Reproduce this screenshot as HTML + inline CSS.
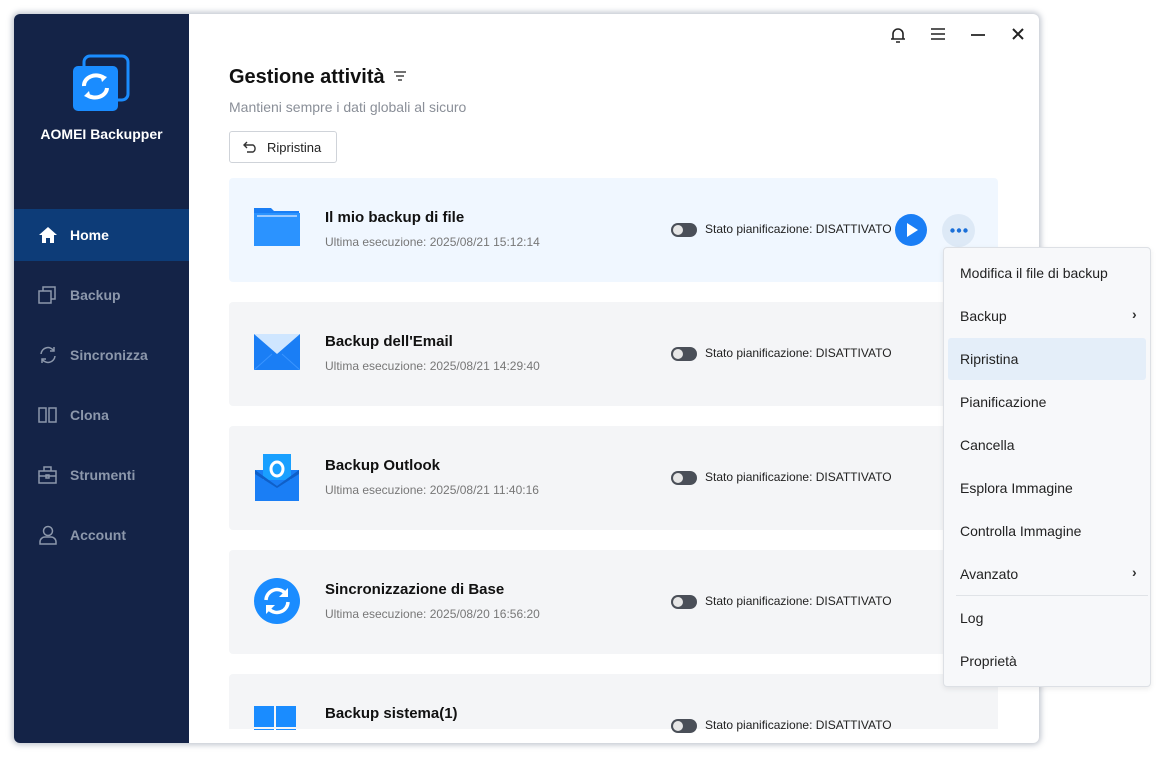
<!DOCTYPE html>
<html><head><meta charset="utf-8"><style>
*{margin:0;padding:0;box-sizing:border-box}
body{width:1163px;height:767px;background:#fff;font-family:"Liberation Sans",sans-serif;position:relative;overflow:hidden}
.win{position:absolute;left:14px;top:14px;width:1025px;height:729px;background:#fff;border-radius:6px;box-shadow:0 0 6px 2px rgba(120,130,150,.45);overflow:hidden}
.side{position:absolute;left:0;top:0;width:175px;height:729px;background:#142347}
.logo{position:absolute;left:58px;top:40px}
.brand{position:absolute;left:0;width:175px;top:112px;text-align:center;color:#fff;font-weight:bold;font-size:14px}
.nav{position:absolute;left:0;width:175px;height:52px;display:flex;align-items:center;color:#8c97ab;font-size:14px;font-weight:bold}
.nav svg{position:absolute;left:24px}
.nav span{position:absolute;left:56px}
.nav.act{background:#0d3c78;color:#fff}
.abs{position:absolute}
.card{position:absolute;left:215px;width:769px;height:104px;background:#f4f5f7;border-radius:4px}
.card .t{position:absolute;left:96px;top:31px;font-size:15px;font-weight:bold;color:#111}
.card .s{position:absolute;left:96px;top:57px;font-size:12px;color:#777}
.card .ic{position:absolute;left:25px;top:28px}
.tog{position:absolute;left:442px;width:26px;height:14px;border-radius:7px;background:#4a4f58}
.tog:after{content:"";position:absolute;left:2px;top:2px;width:10px;height:10px;border-radius:5px;background:#e6e6e6}
.st{position:absolute;left:476px;font-size:12px;color:#222}
.menu{position:absolute;left:943px;top:247px;width:208px;height:440px;background:#f7f8fa;border:1px solid #dde0e5;border-radius:4px;box-shadow:0 2px 6px rgba(0,0,0,.08)}
.mi{position:absolute;left:16px;font-size:14px;color:#222}
.chev{position:absolute;left:188px;font-size:14px;color:#333;font-weight:bold}
</style></head><body>
<div class="win">
 <div class="side">
  <svg class="logo" width="58" height="58" viewBox="0 0 58 58"><rect x="12" y="2" width="44" height="44" rx="6" fill="none" stroke="#1a8cff" stroke-width="3"/><rect x="1" y="12" width="45" height="45" rx="5" fill="#1a8cff"/><path d="M12 32a12 10 0 0 1 20-8" stroke="#fff" stroke-width="4" fill="none"/><path d="M35 34a12 10 0 0 1-20 7" stroke="#fff" stroke-width="4" fill="none"/><path d="M28 20l7 3-5 5z M19 45l-7-3 5-5z" fill="#fff"/></svg>
  <div class="brand">AOMEI Backupper</div>
  <div class="nav act" style="top:195px"><svg width="20" height="18" viewBox="0 0 20 18"><path d="M10 1L1 9h3v8h4v-5h4v5h4V9h3z" fill="#fff"/></svg><span>Home</span></div>
  <div class="nav" style="top:255px"><svg width="18" height="18" viewBox="0 0 18 18" fill="none" stroke="#8c97ab" stroke-width="1.5"><rect x="1" y="5" width="12" height="12"/><path d="M5 5V1h12v12h-4"/></svg><span>Backup</span></div>
  <div class="nav" style="top:315px"><svg width="20" height="18" viewBox="0 0 20 18" fill="none" stroke="#8c97ab" stroke-width="1.5"><path d="M3 8a7 7 0 0 1 13-3M17 10a7 7 0 0 1-13 3"/><path d="M16 1v4h-4M4 17v-4h4"/></svg><span>Sincronizza</span></div>
  <div class="nav" style="top:375px"><svg width="20" height="18" viewBox="0 0 20 18" fill="none" stroke="#8c97ab" stroke-width="1.5"><rect x="1" y="2" width="7" height="14"/><rect x="11" y="2" width="7" height="14"/></svg><span>Clona</span></div>
  <div class="nav" style="top:435px"><svg width="20" height="18" viewBox="0 0 20 18" fill="none" stroke="#8c97ab" stroke-width="1.5"><rect x="1" y="5" width="17" height="12"/><path d="M6 5V1h7v4M1 10h17"/><rect x="8" y="9" width="3" height="3"/></svg><span>Strumenti</span></div>
  <div class="nav" style="top:495px"><svg width="20" height="20" viewBox="0 0 20 20" fill="none" stroke="#8c97ab" stroke-width="1.5"><circle cx="10" cy="6" r="4.5"/><path d="M2 19v-2a5 5 0 0 1 5-5h6a5 5 0 0 1 5 5v2z"/></svg><span>Account</span></div>
 </div>
 <svg class="abs" style="left:876px;top:12px" width="16" height="18" viewBox="0 0 16 18" fill="none" stroke="#222" stroke-width="1.6"><path d="M3 13V8a5 5 0 0 1 10 0v5zM1 13h14M6 16h4"/></svg>
 <svg class="abs" style="left:917px;top:14px" width="14" height="12" stroke="#222" stroke-width="1.6"><path d="M0 1h14M0 6h14M0 11h14"/></svg>
 <svg class="abs" style="left:957px;top:14px" width="14" height="12" stroke="#222" stroke-width="1.8"><path d="M0 7h14"/></svg>
 <svg class="abs" style="left:998px;top:14px" width="12" height="12" stroke="#222" stroke-width="2"><path d="M1 1l10 10M11 1L1 11"/></svg>
 <div class="abs" style="left:215px;top:52px;font-size:20px;font-weight:bold;color:#111">Gestione attività</div>
 <svg class="abs" style="left:380px;top:57px" width="12" height="10" stroke="#444" stroke-width="1.4"><path d="M0 1h12M2 5h8M4 9h4"/></svg>
 <div class="abs" style="left:215px;top:85px;font-size:14px;color:#8a8f98">Mantieni sempre i dati globali al sicuro</div>
 <div class="abs" style="left:215px;top:117px;width:108px;height:32px;border:1px solid #cfd3d9;border-radius:3px;font-size:13px;color:#222;padding:8px 0 0 37px">Ripristina</div>
 <svg class="abs" style="left:229px;top:127px" width="15" height="12" fill="none" stroke="#333" stroke-width="1.4"><path d="M4 1L1 4l3 3M1 4h9a4 4 0 0 1 0 7H4"/></svg>

 <div class="card" style="top:164px;background:#f0f7ff">
  <svg class="ic" width="46" height="40" viewBox="0 0 46 40"><path d="M0 2h17l3 3h25v34H0z" fill="#1a7ef5"/><rect x="0" y="7" width="46" height="33" fill="#2b93ff"/><rect x="3" y="9" width="40" height="2" fill="#9ccaff"/></svg>
  <div class="t">Il mio backup di file</div><div class="s">Ultima esecuzione: 2025/08/21 15:12:14</div>
  <div class="tog" style="top:45px"></div><div class="st" style="top:44px">Stato pianificazione: DISATTIVATO</div>
  <div class="abs" style="left:666px;top:36px;width:32px;height:32px;border-radius:16px;background:#1a7ef5"></div>
  <svg class="abs" style="left:678px;top:45px" width="11" height="14"><path d="M0 0l11 7-11 7z" fill="#fff"/></svg>
  <div class="abs" style="left:713px;top:36px;width:33px;height:33px;border-radius:17px;background:#dde9f6"></div>
  <svg class="abs" style="left:721px;top:50px" width="18" height="5" fill="#1a6fd8"><circle cx="2.5" cy="2.5" r="2.2"/><circle cx="9" cy="2.5" r="2.2"/><circle cx="15.5" cy="2.5" r="2.2"/></svg>
 </div>
 <div class="card" style="top:288px">
  <svg class="ic" width="46" height="40" viewBox="0 0 46 40"><rect x="0" y="4" width="46" height="36" fill="#1a7ef5"/><path d="M0 4h46L23 24z" fill="#cfe6ff"/><path d="M0 40l18-16M46 40L28 24" stroke="#3a95ff" stroke-width="1"/></svg>
  <div class="t">Backup dell'Email</div><div class="s">Ultima esecuzione: 2025/08/21 14:29:40</div>
  <div class="tog" style="top:45px"></div><div class="st" style="top:44px">Stato pianificazione: DISATTIVATO</div>
 </div>
 <div class="card" style="top:412px">
  <svg class="ic" width="46" height="48" viewBox="0 0 46 48" style="top:28px"><rect x="1" y="16" width="44" height="31" fill="#1a7ef5"/><rect x="9" y="0" width="28" height="26" fill="#19a0ff"/><path d="M1 16l22 16 22-16v4L23 34 1 20z" fill="#0f5fc8"/><ellipse cx="23" cy="15" rx="6" ry="7" fill="none" stroke="#fff" stroke-width="3"/></svg>
  <div class="t">Backup Outlook</div><div class="s">Ultima esecuzione: 2025/08/21 11:40:16</div>
  <div class="tog" style="top:45px"></div><div class="st" style="top:44px">Stato pianificazione: DISATTIVATO</div>
 </div>
 <div class="card" style="top:536px">
  <svg class="ic" width="46" height="46" viewBox="0 0 46 46" style="top:28px"><circle cx="23" cy="23" r="23" fill="#1a8cff"/><path d="M12 22a11 11 0 0 1 19-7M34 24a11 11 0 0 1-19 7" stroke="#fff" stroke-width="3.5" fill="none"/><path d="M34 10v9h-9zM12 36v-9h9z" fill="#fff"/></svg>
  <div class="t">Sincronizzazione di Base</div><div class="s">Ultima esecuzione: 2025/08/20 16:56:20</div>
  <div class="tog" style="top:45px"></div><div class="st" style="top:44px">Stato pianificazione: DISATTIVATO</div>
 </div>
 <div class="card" style="top:660px;height:55px;border-radius:4px 4px 0 0">
  <svg class="ic" width="42" height="24" style="top:32px"><rect x="0" y="0" width="20" height="21" fill="#1a8cff"/><rect x="22" y="0" width="20" height="21" fill="#1a8cff"/><rect x="0" y="23" width="20" height="5" fill="#1a8cff"/><rect x="22" y="23" width="20" height="5" fill="#1a8cff"/></svg>
  <div class="t">Backup sistema(1)</div>
  <div class="tog" style="top:45px"></div><div class="st" style="top:44px">Stato pianificazione: DISATTIVATO</div>
 </div>
</div>
<div class="menu">
 <div class="mi" style="top:17px">Modifica il file di backup</div>
 <div class="mi" style="top:60px">Backup</div><div class="chev" style="top:58px">›</div>
 <div class="abs" style="left:4px;top:90px;width:198px;height:42px;background:#e4eef9;border-radius:3px"></div>
 <div class="mi" style="top:103px">Ripristina</div>
 <div class="mi" style="top:146px">Pianificazione</div>
 <div class="mi" style="top:189px">Cancella</div>
 <div class="mi" style="top:232px">Esplora Immagine</div>
 <div class="mi" style="top:275px">Controlla Immagine</div>
 <div class="mi" style="top:318px">Avanzato</div><div class="chev" style="top:316px">›</div>
 <div class="abs" style="left:12px;top:347px;width:192px;height:1px;background:#e0e3e7"></div>
 <div class="mi" style="top:362px">Log</div>
 <div class="mi" style="top:405px">Proprietà</div>
</div>
</body></html>
